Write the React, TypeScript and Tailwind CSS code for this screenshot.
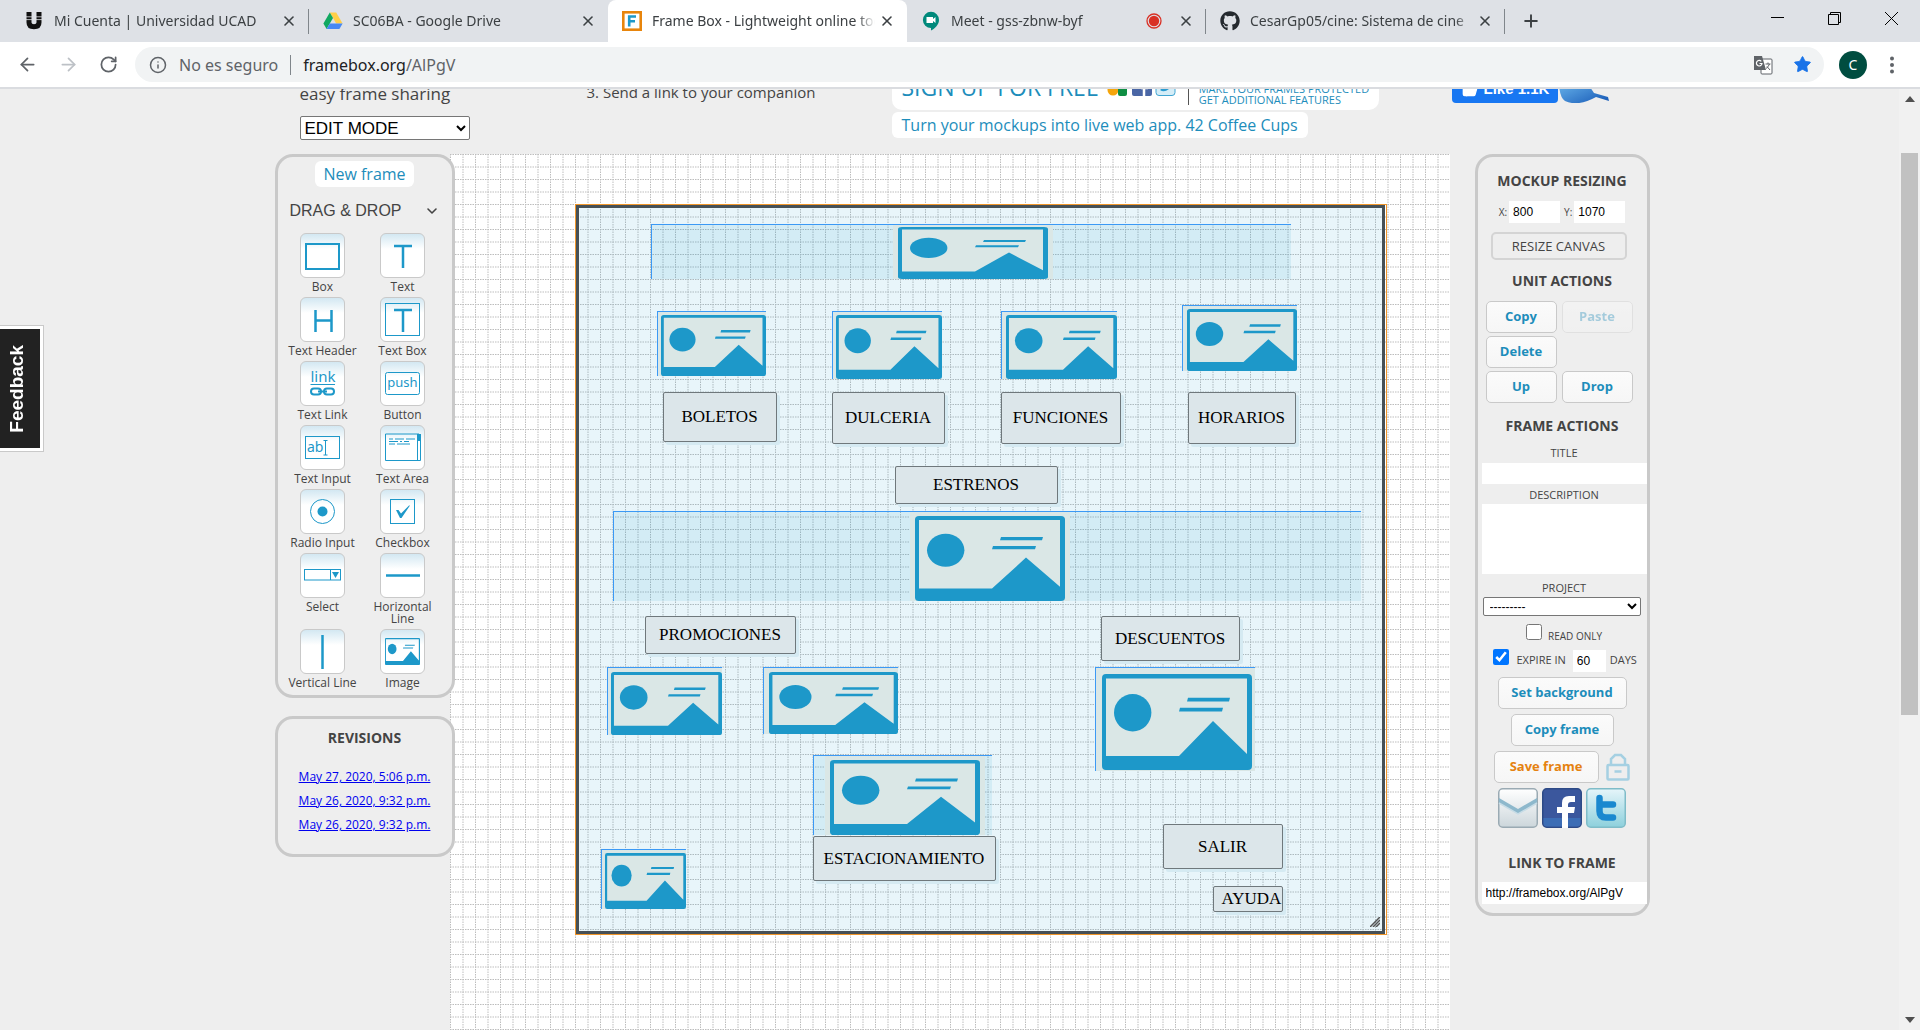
import React from "react";
import { ArrowLeft, ArrowRight, ChevronDown, Info, Plus, RotateCw, Star, ThumbsUp, X } from "lucide-react";
import { FaGithub } from "react-icons/fa";

const BLUE = "#1d98c9";

/* ---------- browser chrome ---------- */

function Tab({ icon, title, active, divider, recording }: { icon: React.ReactNode; title: string; active?: boolean; divider?: boolean; recording?: boolean }) {
  return (
    <div className={active ? "relative flex h-full w-[299px] items-center rounded-t-lg bg-white px-3 text-[#3c4043]" : "relative flex h-full w-[299px] items-center px-3 text-[#3c4043]"}>
      <span className="flex w-6 shrink-0 justify-center">{icon}</span>
      <span className="ml-2 flex-1 overflow-hidden text-[14px] leading-5 whitespace-nowrap [mask-image:linear-gradient(to_right,black_92%,transparent)]">{title}</span>
      {recording && (
        <svg viewBox="0 0 16 16" className="mr-3 size-4 shrink-0">
          <circle cx="8" cy="8" r="7" fill="none" stroke="#d93025" strokeWidth="1.3" />
          <circle cx="8" cy="8" r="5.2" fill="#d93025" />
        </svg>
      )}
      <button aria-label="Close tab" className="ml-1 shrink-0"><X size={16} strokeWidth={2.4} /></button>
      {divider && <span className="absolute top-[9px] right-0 h-[25px] w-px bg-[#80868b]" />}
    </div>
  );
}

function UIcon() {
  return (
    <svg viewBox="0 0 18 20" className="h-5 w-[18px]">
      <path d="M4 1V11.5Q4 15.8 9 15.8T14 11.5V1" fill="none" stroke="#111" strokeWidth="5" />
      <path d="M0 8.6H18M0 5.8H18" stroke="#dee1e6" strokeWidth=".8" />
    </svg>
  );
}
function DriveIcon() {
  return (
    <svg viewBox="0 0 20 18" className="h-[18px] w-5">
      <path d="M6.8 0.5H13.2L19.6 11.5H13.2Z" fill="#ffcf48" />
      <path d="M6.8 .5 10 6 3.6 17 .4 11.5Z" fill="#11a861" />
      <path d="M6.8 11.5H19.6L16.4 17H3.6Z" fill="#4688f4" />
    </svg>
  );
}
function FrameIcon() {
  return (
    <svg viewBox="0 0 20 20" className="size-5">
      <rect x="1.3" y="1.3" width="17.4" height="17.4" fill="#fff" stroke="#e8850c" strokeWidth="2.6" />
      <path d="M7.2 15.5V5.5H14M7.2 10.3H13" fill="none" stroke={BLUE} strokeWidth="2.6" />
    </svg>
  );
}
function MeetIcon() {
  return (
    <svg viewBox="0 0 18 20" className="h-5 w-[18px]">
      <path d="M9 .8A8 8 0 0 0 9 17V19.6C13 17.4 17 13.600 17 8.900A8 8 0 0 0 9 .8Z" fill="#00897b" />
      <path d="M4.500 6H11V8L13.500 6V12L11 10V12H4.500Z" fill="#fff" />
    </svg>
  );
}

function BrowserBar() {
  return (
    <header className="shrink-0 border-b-2 border-[#dadce0] font-['Noto_Sans','Open_Sans',sans-serif]">
      <div className="flex h-[42px] bg-[#dee1e6] pl-[10px]">
        <Tab icon={<UIcon />} title="Mi Cuenta | Universidad UCAD" divider />
        <Tab icon={<DriveIcon />} title="SC06BA - Google Drive" />
        <Tab icon={<FrameIcon />} title="Frame Box - Lightweight online tool" active />
        <Tab icon={<MeetIcon />} title="Meet - gss-zbnw-byf" recording divider />
        <Tab icon={<FaGithub size={20} color="#24292e" />} title="CesarGp05/cine: Sistema de cine" divider />
        <button aria-label="New tab" className="ml-4 text-[#3c4043]"><Plus size={20} strokeWidth={2.3} /></button>
        <div className="ml-auto flex h-9 items-center gap-[44px] pr-[22px]">
          <button aria-label="Minimize"><svg viewBox="0 0 13 13" className="size-[13px]"><path d="M0 5.500H13" stroke="#000" /></svg></button>
          <button aria-label="Restore"><svg viewBox="0 0 13 13" className="size-[13px]"><path d="M.5 2.500H10.500V12.500H.5ZM2.500 2.500V.5H12.500V10.500H10.500" fill="none" stroke="#000" /></svg></button>
          <button aria-label="Close"><svg viewBox="0 0 13 13" className="size-[13px]"><path d="M0 0 13 13M13 0 0 13" stroke="#000" /></svg></button>
        </div>
      </div>
      <div className="flex h-[45px] items-center bg-white pl-[17px] text-[#5f6368]">
        <button aria-label="Back"><ArrowLeft size={21} /></button>
        <button aria-label="Forward" className="ml-5 text-[#bdc1c6]"><ArrowRight size={21} /></button>
        <button aria-label="Reload" className="ml-5"><RotateCw size={19} strokeWidth={2.2} /></button>
        <div className="ml-[17px] flex h-[35px] flex-1 items-center rounded-full bg-[#f1f3f4] pr-3 pl-[14px] text-[16px]">
          <Info size={18} />
          <span className="ml-3">No es seguro</span>
          <span className="mx-3 h-5 w-px bg-[#80868b]" />
          <span className="text-[#202124]">framebox.org</span><span>/AlPgV</span>
          <button aria-label="Translate" className="ml-auto">
            <svg viewBox="0 0 20 20" className="size-5">
              <rect x="8" y="4" width="11" height="15" rx="1" fill="#fff" stroke="#5f6368" />
              <path d="M1 1H9L13 15H1Z" fill="#5f6368" />
              <path d="M8.300 6.300A2.800 2.800 0 1 0 9 8.500H6.500" fill="none" stroke="#fff" strokeWidth="1.200" />
              <path d="M12.500 9H17.500M15 7.500V9M16.500 9Q15.500 12 13 13.500M14 11.500 17 15" fill="none" stroke="#5f6368" />
            </svg>
          </button>
          <button aria-label="Bookmark" className="ml-5 text-[#1a73e8]"><Star size={19} fill="#1a73e8" strokeWidth={1} /></button>
        </div>
        <button className="ml-[15px] size-7 rounded-full bg-[#004d40] text-sm text-white">C</button>
        <button aria-label="Menu" className="mr-[18px] ml-[15px]">
          <svg viewBox="0 0 20 20" className="size-5" fill="#5f6368"><circle cx="10" cy="3.500" r="2" /><circle cx="10" cy="10" r="2" /><circle cx="10" cy="16.500" r="2" /></svg>
        </button>
      </div>
    </header>
  );
}

/* ---------- site header ---------- */

function SiteHeader() {
  return (
    <div className="flex h-[65px] items-end overflow-hidden pl-[25px] text-[#444]">
      <div className="w-[287px] shrink-0 pb-[14px]">
        <p className="mb-3 text-[17px] leading-5">easy frame sharing</p>
        <select aria-label="Mode" className="block h-6 w-[170px] rounded-[2px] border border-[#767676] bg-white font-['Liberation_Sans',sans-serif] text-[17px] leading-5 text-black">
          <option>EDIT MODE</option>
        </select>
      </div>
      <p className="w-[305px] shrink-0 pb-[52px] text-[15px] leading-5">3. Send a link to your companion</p>
      <div className="flex w-[560px] shrink-0 flex-col items-start gap-[2px] pb-4 text-[#1d8dbb]">
        <a href="#signup" className="flex h-14 items-end rounded-[10px] bg-white px-[10px]">
          <span className="pb-2 text-[23px] leading-[30px]">SIGN UP FOR FREE</span>
          <svg viewBox="0 0 70 20" className="mb-[14px] ml-2 h-5 w-[70px]">
            <circle cx="6" cy="14" r="5.500" fill="#f5a50b" /><rect x="11" y="4" width="9" height="16" rx="2" fill="#0f8e43" />
            <rect x="25" y="0" width="20" height="20" rx="2" fill="#4a66a5" /><path d="M37 20V10Q37 6 41 6M34 12H41" stroke="#fff" strokeWidth="2.500" fill="none" />
            <rect x="49" y="1" width="19" height="18.500" rx="3" fill="#d5edf7" stroke="#41a5d2" /><path d="M53 14Q57 17 62 13 65 8 63 6L60 8" fill="#2a9bd0" />
          </svg>
          <span className="mb-[5px] ml-[11px] border-l border-[#555] pl-[10px] text-[11px] leading-[11px] whitespace-nowrap">MAKE YOUR FRAMES PROTECTED<br />GET ADDITIONAL FEATURES</span>
        </a>
        <a href="#cups" className="rounded-md bg-white px-[10px] text-[16px] leading-[26px] whitespace-nowrap">Turn your mockups into live web app. 42 Coffee Cups</a>
      </div>
      <div className="flex shrink-0 items-end pb-[51px]">
        <button className="flex h-7 w-[106px] items-center rounded-[4px] bg-[#1877f2] px-[10px] font-['Liberation_Sans',sans-serif] text-[15px] font-bold whitespace-nowrap text-white">
          <ThumbsUp size={16} fill="#fff" className="mr-[6px] shrink-0" />Like 1.1K
        </button>
        <svg viewBox="0 0 52 30" className="h-[30px] w-[52px]">
          <defs><linearGradient id="bird" x1="0" y1="0" x2="1" y2="1"><stop offset="0" stopColor="#6db9ee" /><stop offset="1" stopColor="#1557b5" /></linearGradient></defs>
          <path d="M1 8Q20 6 32 14L36 20 50 24 51 28 38 24Q20 34 7 28 1 24 1 8Z" fill="url(#bird)" />
        </svg>
      </div>
    </div>
  );
}

/* ---------- left column ---------- */

function ImageGlyph() {
  return (
    <g fill={BLUE}>
      <path d="M4 0H146Q150 0 150 4V92Q150 96 146 96H4Q0 96 0 92V4Q0 0 4 0ZM4 4.500V82H77L111 47 145 80V4.500Z" fillRule="evenodd" />
      <circle cx="30.700" cy="38.700" r="18.700" />
      <path d="M86 23.800H128L127 27.500H85ZM78 33.800H121L120 37.500H77Z" />
    </g>
  );
}

const s = { fill: "none", stroke: BLUE };
const tools: { label: string; art: React.ReactNode }[] = [
  { label: "Box", art: <rect x="5" y="10" width="33" height="25" {...s} strokeWidth="2" /> },
  { label: "Text", art: <path d="M13 12H31M22 12V34" {...s} strokeWidth="2.500" /> },
  { label: "Text Header", art: <path d="M14.500 12V34M30.500 12V34M14.500 22.500H30.500" {...s} strokeWidth="2.500" /> },
  { label: "Text Box", art: <><rect x="4.500" y="5.500" width="34" height="32" {...s} /><path d="M13 12H31M22 12V34" {...s} strokeWidth="2.500" /></> },
  {
    label: "Text Link",
    art: <><text x="22" y="20" textAnchor="middle" fontSize="15" fill={BLUE}>link</text><path d="M9.500 22.500H34" {...s} /><rect x="10" y="26.500" width="10" height="6" rx="3" {...s} strokeWidth="2" /><rect x="23" y="26.500" width="10" height="6" rx="3" {...s} strokeWidth="2" /><path d="M17 29.500H26" {...s} strokeWidth="2" /></>,
  },
  { label: "Button", art: <><rect x="4.500" y="10.500" width="34" height="22" rx="2" {...s} /><text x="21.500" y="25" textAnchor="middle" fontSize="13" fill={BLUE}>push</text></> },
  { label: "Text Input", art: <><rect x="4.500" y="10.500" width="34" height="22" {...s} /><text x="6" y="26" fontSize="14" fill={BLUE}>ab</text><path d="M22.500 14.500H26.500M24.500 14.500V29M22.500 29H26.500" {...s} /></> },
  { label: "Text Area", art: <><path d="M4.500 8H38M4.500 34.500H39.500V8M4.500 8V34.500M36.500 8V34.500" {...s} /><path d="M8 13H12M14 13H23M25 13H34M8 15.500H17M19 15.500H21M23 15.500H28M8 18H14M16 18H29" {...s} /><path d="M36 8H40V15H36Z" fill={BLUE} /></> },
  { label: "Radio Input", art: <><circle cx="21.500" cy="21.500" r="12" {...s} /><circle cx="21.500" cy="21.500" r="5" fill={BLUE} /></> },
  { label: "Checkbox", art: <><rect x="9.500" y="9.500" width="24" height="24" {...s} /><path d="M15 20H17.500L20 23.500 28 15.500H29L20.500 28H19Z" fill={BLUE} /></> },
  { label: "Select", art: <><rect x="3.500" y="15.500" width="36" height="10.500" {...s} /><path d="M29.500 15.500V26" {...s} /><path d="M31 18H38L34.500 24Z" fill={BLUE} /></> },
  { label: "Horizontal Line", art: <path d="M5 21.500H39" {...s} strokeWidth="2.500" /> },
  { label: "Vertical Line", art: <path d="M21.500 5V39" {...s} strokeWidth="2.500" /> },
  { label: "Image", art: <svg x="4" y="8" width="35" height="27" viewBox="0 0 150 96" preserveAspectRatio="none"><ImageGlyph /></svg> },
];

function ToolPanel() {
  return (
    <section className="rounded-[18px] border-[3px] border-[#c9c9c9] bg-[#eee] pt-1 pb-[2px] text-[#444]">
      <a href="#new" className="mx-auto block w-[99px] rounded-md bg-white text-center text-[16px] leading-[26px] text-[#1d8dbb]">New frame</a>
      <button className="mt-[14px] flex w-full items-center justify-between px-3 font-['Liberation_Sans',sans-serif] text-[16px] leading-5">
        DRAG &amp; DROP <ChevronDown size={16} strokeWidth={2.4} />
      </button>
      <div className="mt-3 grid grid-cols-[80px_80px] justify-center pr-1">
        {tools.map((t) => (
          <button key={t.label} className="flex flex-col items-center">
            <span className="flex size-[45px] rounded-md border border-[#c9c9c9] bg-linear-to-b from-[#d3e8f2] to-white to-35%">
              <svg viewBox="0 0 43 43" className="size-[43px] font-['Noto_Sans',sans-serif]">{t.art}</svg>
            </span>
            <span className="mt-[3px] mb-1 max-w-[78px] text-[12px] leading-3">{t.label}</span>
          </button>
        ))}
      </div>
    </section>
  );
}

function Revisions() {
  return (
    <section className="mt-[18px] rounded-[18px] border-[3px] border-[#c9c9c9] bg-[#eee] pt-[9px] pb-[17px] text-center">
      <h2 className="text-[14px] leading-5 font-bold text-[#444]">REVISIONS</h2>
      <ul className="mt-[17px] text-[12px] leading-6 whitespace-nowrap text-[#0000ee] underline">
        <li><a href="#r3">May 27, 2020, 5:06 p.m.</a></li>
        <li><a href="#r2">May 26, 2020, 9:32 p.m.</a></li>
        <li><a href="#r1">May 26, 2020, 9:32 p.m.</a></li>
      </ul>
    </section>
  );
}

/* ---------- canvas ---------- */

type Picture = { x: number; y: number; w: number; h: number; ix: number; iy: number; iw: number; ih: number };
const pictures: Picture[] = [
  { x: 72, y: 16, w: 640, h: 55, ix: 247, iy: 3, iw: 150, ih: 52 },
  { x: 78, y: 103, w: 109, h: 65, ix: 4, iy: 4, iw: 105, ih: 61 },
  { x: 253, y: 103, w: 110, h: 68, ix: 4, iy: 4, iw: 106, ih: 64 },
  { x: 422, y: 103, w: 116, h: 68, ix: 5, iy: 4, iw: 111, ih: 64 },
  { x: 603, y: 97, w: 115, h: 66, ix: 5, iy: 4, iw: 110, ih: 62 },
  { x: 34, y: 303, w: 748, h: 90, ix: 302, iy: 5, iw: 150, ih: 85 },
  { x: 28, y: 459, w: 115, h: 68, ix: 4, iy: 5, iw: 111, ih: 63 },
  { x: 184, y: 459, w: 135, h: 67, ix: 6, iy: 5, iw: 129, ih: 62 },
  { x: 516, y: 459, w: 160, h: 104, ix: 7, iy: 7, iw: 150, ih: 96 },
  { x: 234, y: 547, w: 179, h: 80, ix: 17, iy: 5, iw: 150, ih: 75 },
  { x: 22, y: 641, w: 85, h: 60, ix: 4, iy: 4, iw: 81, ih: 56 },
];
const labels = [
  { t: "BOLETOS", x: 84, y: 184, w: 114, h: 50 },
  { t: "DULCERIA", x: 253, y: 184, w: 113, h: 52 },
  { t: "FUNCIONES", x: 422, y: 184, w: 120, h: 52 },
  { t: "HORARIOS", x: 609, y: 184, w: 108, h: 52 },
  { t: "ESTRENOS", x: 316, y: 258, w: 163, h: 38 },
  { t: "PROMOCIONES", x: 66, y: 408, w: 151, h: 38 },
  { t: "DESCUENTOS", x: 522, y: 408, w: 139, h: 45 },
  { t: "ESTACIONAMIENTO", x: 234, y: 628, w: 183, h: 45 },
  { t: "SALIR", x: 584, y: 616, w: 120, h: 45 },
  { t: "AYUDA", x: 634, y: 678, w: 70, h: 26 },
];

function Canvas() {
  return (
    <main className="relative -ml-[5px] w-[1000px] shrink-0 self-stretch bg-white">
      <svg className="absolute inset-0 size-full" aria-hidden="true">
        <defs>
          <pattern id="grid" width="25" height="25" patternUnits="userSpaceOnUse">
            <path d="M0 .5H25M0 13H25M.5 0V25M13 0V25" stroke="#bdbdbd" strokeDasharray="1.500 1" fill="none" />
          </pattern>
        </defs>
        <rect width="100%" height="100%" fill="url(#grid)" />
      </svg>
      <div className="relative mt-[50px] ml-[125px] h-[731px] w-[812px] border border-[#f0962a] pr-px">
        <div className="relative h-full border-[3px] border-[#465056] bg-[#209bca]/10">
          {pictures.map((p) => (
            <div key={`${p.x}-${p.y}`} className="absolute overflow-hidden border-t border-l border-[#3b99f5] bg-[#209bca]/10" style={{ left: p.x, top: p.y, width: p.w, height: p.h }}>
              <svg className="absolute -top-px -left-px" width={p.w} height={p.h}>
                <rect x={p.ix < 10 ? 1 : p.ix - 5} y="1" width={p.ix < 10 ? p.w : p.iw + 10} height={p.h} fill="#dae7e6" />
                <svg x={p.ix} y={p.iy} width={p.iw} height={p.ih} viewBox="0 0 150 96" preserveAspectRatio="none"><ImageGlyph /></svg>
              </svg>
            </div>
          ))}
          {labels.map((l) => (
            <button key={l.t} className="absolute flex items-center rounded-[2px] border border-[#6f787c] bg-[#dce6ea] px-2 font-['Liberation_Serif',serif] text-[17px] leading-5 whitespace-nowrap text-black shadow-[3px_3px_0_#d5eaf2] [justify-content:safe_center]" style={{ left: l.x, top: l.y, width: l.w, height: l.h }}>
              {l.t}
            </button>
          ))}
          <svg viewBox="0 0 10 10" className="absolute right-[2px] bottom-1 size-[10px]"><path d="M0 10 10 0M3 10 10 3M6 10 10 6" stroke="#555" strokeWidth="1.500" /></svg>
        </div>
      </div>
    </main>
  );
}

/* ---------- right column ---------- */

const action = "rounded-[5px] border border-[#c9c9c9] bg-linear-to-b from-[#fbfbfb] to-[#f6f6f6] text-[13px] font-bold text-[#1d8dbb]";

function ActionPanel() {
  return (
    <aside className="ml-[25px] w-[175px] shrink-0 self-start rounded-[18px] border-[3px] border-[#c9c9c9] pt-[14px] pb-[9px] text-[#444]">
      <h2 className="text-center text-[14px] leading-5 font-bold">MOCKUP RESIZING</h2>
      <div className="mt-[10px] flex items-center justify-center gap-[2px] text-[10px]">
        <label htmlFor="sx">X:</label>
        <input id="sx" defaultValue="800" className="h-[22px] w-[51px] bg-white px-1 font-['Liberation_Sans',sans-serif] text-[12px] text-black" />
        <label htmlFor="sy" className="ml-[2px]">Y:</label>
        <input id="sy" defaultValue="1070" className="h-[22px] w-[51px] bg-white px-1 font-['Liberation_Sans',sans-serif] text-[12px] text-black" />
      </div>
      <button className="mt-[9px] ml-[13px] block h-7 w-[136px] rounded-[5px] border-2 border-[#d4d4d4] text-[13px] leading-5">RESIZE CANVAS</button>
      <h2 className="mt-[11px] text-center text-[14px] leading-5 font-bold">UNIT ACTIONS</h2>
      <div className="mt-[10px] ml-2 grid grid-cols-[71px_71px] gap-x-[5px] gap-y-[3px]">
        <button className={`${action} h-8`}>Copy</button>
        <button disabled className={`${action} h-8 opacity-35`}>Paste</button>
        <button className={`${action} h-8`}>Delete</button>
        <button className={`${action} col-start-1 h-8`}>Up</button>
        <button className={`${action} h-8`}>Drop</button>
      </div>
      <h2 className="mt-[13px] text-center text-[14px] leading-5 font-bold">FRAME ACTIONS</h2>
      <div className="mt-[7px] ml-1 text-center text-[11px]">
        <label htmlFor="title" className="block leading-5">TITLE</label>
        <input id="title" className="block h-[21px] w-full bg-white" />
        <label htmlFor="desc" className="block pt-px leading-[19px]">DESCRIPTION</label>
        <textarea id="desc" className="block h-[70px] w-full resize-none bg-white" />
        <label htmlFor="project" className="block pt-1 leading-[19px]">PROJECT</label>
        <select id="project" className="ml-px block h-[19px] w-[158px] rounded-[2px] border border-[#767676] bg-white pl-[2px] font-['Liberation_Sans',sans-serif] text-[12px] text-black"><option>---------</option></select>
      </div>
      <label className="mt-2 flex h-[22px] items-start justify-center gap-[6px] pl-1 text-[10px]">
        <input type="checkbox" className="m-0 size-4" /><span className="pt-1 leading-4">READ ONLY</span>
      </label>
      <div className="mt-[3px] ml-[15px] flex items-center text-[11px]">
        <label className="flex items-center gap-2"><input type="checkbox" defaultChecked className="m-0 mb-[7px] size-4 accent-[#0075ff]" />EXPIRE IN</label>
        <input aria-label="Days until expiry" defaultValue="60" className="mr-1 ml-[7px] h-[22px] w-[33px] bg-white px-1 font-['Liberation_Sans',sans-serif] text-[12px] text-black" />
        DAYS
      </div>
      <button className={`${action} mx-auto mt-[5px] block h-8 w-[129px]`}>Set background</button>
      <button className={`${action} mx-auto mt-[5px] block h-8 w-[103px]`}>Copy frame</button>
      <div className="mt-[5px] ml-4 flex items-center gap-[7px]">
        <button className="h-8 w-[105px] rounded-[5px] border border-[#c9c9c9] bg-linear-to-b from-[#fbfbfb] to-[#f6f6f6] text-[13px] font-bold text-[#e58210]">Save frame</button>
        <svg viewBox="0 0 24 28" className="h-7 w-6" fill="none" stroke="#a5d0e2" strokeWidth="2.500"><rect x="1.500" y="12" width="21" height="14.500" rx="1" /><path d="M5 12V6L9 2H15L19 6V12M8.500 18.500H15.500" /></svg>
      </div>
      <div className="mt-[5px] flex justify-center gap-1 pr-px">
        <a href="#mail" aria-label="Mail">
          <svg viewBox="0 0 40 40" className="size-10">
            <defs><linearGradient id="ml" x1="0" y1="0" x2="0" y2="1"><stop offset="0" stopColor="#fff" /><stop offset="1" stopColor="#ccd6db" /></linearGradient></defs>
            <rect x=".75" y=".75" width="38.500" height="38.500" rx="4" fill="url(#ml)" stroke="#9aaab3" strokeWidth="1.500" />
            <path d="M1 10 20 21 39 10V15L20 26 1 15Z" fill="#8db8cc" /><path d="M1 15 20 26 39 15" fill="none" stroke="#c7dce6" strokeWidth="1.500" />
          </svg>
        </a>
        <a href="#fb" aria-label="Facebook">
          <svg viewBox="0 0 40 40" className="size-10">
            <rect x=".75" y=".75" width="38.500" height="38.500" rx="4" fill="#3b579d" stroke="#2d4a86" strokeWidth="1.500" />
            <path d="M1.500 30H38.500V35Q38.500 38.500 35 38.500H5Q1.500 38.500 1.500 35Z" fill="#3c6db5" />
            <path d="M20 40V25H15V19H20V15Q20 8 27 8H33V14H29Q26 14 26 17V19H33L32 25H26V40Z" fill="#fff" />
          </svg>
        </a>
        <a href="#tw" aria-label="Twitter">
          <svg viewBox="0 0 40 40" className="size-10">
            <defs><linearGradient id="tw" x1="0" y1="0" x2="0" y2="1"><stop offset="0" stopColor="#e6f5fa" /><stop offset="1" stopColor="#8dd0dc" /></linearGradient></defs>
            <rect x=".75" y=".75" width="38.500" height="38.500" rx="4" fill="url(#tw)" stroke="#7fbcc8" strokeWidth="1.500" />
            <path d="M13.500 10V23Q13.500 29.500 20 29.500H27M13.500 16.500H27" fill="none" stroke="#1a88cf" strokeWidth="6.500" strokeLinecap="round" />
          </svg>
        </a>
      </div>
      <label htmlFor="link" className="mt-[25px] block text-center text-[14px] leading-5 font-bold">LINK TO FRAME</label>
      <input id="link" readOnly value="http://framebox.org/AlPgV" className="mt-[9px] ml-1 block h-[22px] w-[165px] bg-white px-1 font-['Liberation_Sans',sans-serif] text-[12px] text-black" />
    </aside>
  );
}

export default function App() {
  return (
    <div className="flex h-screen flex-col overflow-hidden bg-[#eee] font-['Open_Sans',sans-serif]">
      <BrowserBar />
      <div className="relative flex min-h-0 flex-1">
        <div className="flex min-w-0 flex-1 flex-col overflow-hidden">
          <div className="mx-auto flex w-full max-w-[1400px] flex-1 flex-col pl-[25px]">
            <SiteHeader />
            <div className="flex flex-1">
              <div className="z-10 w-[180px] shrink-0">
                <ToolPanel />
                <Revisions />
              </div>
              <Canvas />
              <ActionPanel />
            </div>
          </div>
        </div>
        <button className="absolute top-[236px] left-0 flex h-[127px] w-11 items-center justify-center border border-l-0 border-[#c9c9c9] bg-[#222] font-['Liberation_Sans',sans-serif] text-[19px] font-bold text-white shadow-[inset_-3px_0_0_#fff,inset_0_3px_0_#fff,inset_0_-3px_0_#fff]">
          <span className="rotate-180 pl-2 [writing-mode:vertical-rl]">Feedback</span>
        </button>
        <div className="flex w-[21px] shrink-0 flex-col items-center justify-between bg-[#f1f1f1] py-[7px]" aria-hidden="true">
          <svg viewBox="0 0 10 6" className="h-[6px] w-[10px]"><path d="M0 6 5 0 10 6Z" fill="#505050" /></svg>
          <span className="mt-[51px] mb-auto h-[562px] w-[17px] bg-[#c1c1c1]" />
          <svg viewBox="0 0 10 6" className="h-[6px] w-[10px]"><path d="M0 0 5 6 10 0Z" fill="#505050" /></svg>
        </div>
      </div>
    </div>
  );
}
